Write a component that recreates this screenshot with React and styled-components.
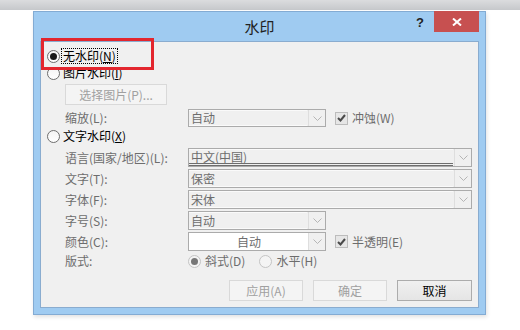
import React from 'react';
import styled, { createGlobalStyle } from 'styled-components';

const GlobalStyle = createGlobalStyle`
	html, body {
		margin: 0;
		padding: 0;
		background: #fff;
	}
	body {
		font-family: "Noto Sans CJK SC", "Liberation Sans", sans-serif;
		font-size: 12px;
		color: #000;
	}
`;

const Page = styled.div`
	width: 520px;
	height: 330px;
	overflow: hidden;
	background: #fff;
`;

const TopStrip = styled.div`
	height: 10px;
	background: linear-gradient(#dbdcde, #c6c8cb);
`;

const Window = styled.div`
	margin: 1px 0 0 33px;
	width: 453px;
	height: 304px;
	box-sizing: border-box;
	border: 1px solid #83abd3;
	background: #9fcbf1;
	padding: 0 6px 6px;
	display: flex;
	flex-direction: column;
	box-shadow: 1px 2px 4px rgba(0, 0, 0, 0.12);
`;

const TitleBar = styled.div`
	height: 29px;
	display: grid;
	grid-template-columns: 1fr auto 1fr;
	align-items: center;
`;

const Title = styled.div`
	grid-column: 2;
	font-size: 15px;
	color: #222;
	line-height: 1;
`;

const TitleControls = styled.div`
	grid-column: 3;
	justify-self: end;
	align-self: start;
	display: flex;
	align-items: flex-start;
`;

const Help = styled.div`
	margin-top: 4px;
	margin-right: 10px;
	font-family: "Liberation Sans", sans-serif;
	font-weight: bold;
	font-size: 13px;
	line-height: 13px;
	color: #222;
`;

const CloseButton = styled.div`
	margin-top: -1px;
	width: 45px;
	height: 21px;
	background: #c75050;
	display: flex;
	align-items: center;
	justify-content: center;
`;

const Client = styled.div`
	position: relative;
	flex: 1;
	border: 1px solid #8aaccf;
	background: #f0f0f0;
	padding: 6px 6px 0 6px;
	display: flex;
	flex-direction: column;
`;

const Annotation = styled.div`
	position: absolute;
	left: 0;
	top: -4px;
	width: 113px;
	height: 32px;
	box-sizing: border-box;
	border: 3px solid #e3262e;
	pointer-events: none;
`;

const Row = styled.div`
	display: flex;
	align-items: center;
	height: ${p => p.h || 16}px;
	margin-top: ${p => p.mt || 0}px;
	padding-left: ${p => p.indent || 0}px;
`;

const RadioCircle = styled.span`
	width: 13px;
	height: 13px;
	box-sizing: border-box;
	border-radius: 50%;
	border: 1px solid ${p => p.disabled ? '#c4c4c4' : '#6e6e6e'};
	background: ${p => p.disabled ? '#f4f4f4' : 'linear-gradient(#f4f4f4, #ffffff)'};
	margin-left: ${p => p.ml || 0}px;
	display: flex;
	align-items: center;
	justify-content: center;
	flex-shrink: 0;
	&::after {
		content: '';
		display: ${p => p.checked ? 'block' : 'none'};
		width: 7px;
		height: 7px;
		border-radius: 50%;
		background: ${p => p.disabled ? '#777' : '#1a1a1a'};
	}
`;

const Text = styled.span`
	color: ${p => p.dim ? '#6d6d6d' : '#000'};
	line-height: 14px;
	white-space: nowrap;
	margin-left: ${p => p.ml || 0}px;
	padding: 0 1px;
	outline: ${p => p.focus ? '1px dotted #000' : 'none'};
	outline-offset: 0;
`;

const FieldLabel = styled.span`
	width: 123px;
	flex-shrink: 0;
	color: #6d6d6d;
	white-space: nowrap;
	line-height: 14px;
`;

const Combo = styled.div`
	width: ${p => p.w}px;
	height: 100%;
	box-sizing: border-box;
	border: 1px solid #ababab;
	background: ${p => p.white ? '#fff' : '#f0f0f0'};
	display: flex;
	flex-shrink: 0;
`;

const ComboText = styled.div`
	flex: 1;
	margin-right: 1px;
	padding-left: 2px;
	box-sizing: border-box;
	border-top: 1px solid ${p => p.white ? '#fff' : '#fafafa'};
	border-bottom: ${p => p.underline ? '3px double #6d6d6d' : `1px solid ${p.white ? '#fff' : '#fafafa'}`};
	color: #6d6d6d;
	display: flex;
	align-items: center;
	justify-content: ${p => p.center ? 'center' : 'flex-start'};
	line-height: 14px;
	white-space: nowrap;
`;

const ComboButton = styled.div`
	width: 16px;
	border-left: 1px solid #dedede;
	background: #f0f0f0;
	display: flex;
	align-items: center;
	justify-content: center;
`;

const CheckGroup = styled.div`
	display: flex;
	align-items: center;
	margin-left: 9px;
`;

const CheckBox = styled.span`
	width: 13px;
	height: 13px;
	box-sizing: border-box;
	border: 1px solid #bcbcbc;
	background: #e6e6e6;
	display: flex;
	align-items: center;
	justify-content: center;
	margin-right: 3px;
`;

const PushButton = styled.div`
	width: ${p => p.w || 74}px;
	height: 21px;
	box-sizing: border-box;
	border: 1px solid ${p => p.disabled ? '#d9d9d9' : '#acacac'};
	background: ${p => p.disabled ? '#f4f4f4' : 'linear-gradient(#f0f0f0, #e5e5e5)'};
	color: ${p => p.disabled ? '#a0a0a0' : '#000'};
	display: flex;
	align-items: center;
	justify-content: center;
	line-height: 14px;
	white-space: nowrap;
	flex-shrink: 0;
`;

const ButtonBar = styled.div`
	display: flex;
	justify-content: flex-end;
	gap: 10px;
	margin-top: 11px;
`;

const Chevron = () => (
	<svg width="9" height="5" viewBox="0 0 9 5">
		<polyline points="0.5,0.5 4.5,4.5 8.5,0.5" fill="none" stroke="#b5b5b5" strokeWidth="1" />
	</svg>
);

const Tick = () => (
	<svg width="9" height="8" viewBox="0 0 9 8">
		<polyline points="1,4 3.5,6.5 8,1" fill="none" stroke="#4a4a4a" strokeWidth="2" />
	</svg>
);

const ComboBox = ({ w, value, white, center, underline }) => (
	<Combo w={w} white={white}>
		<ComboText white={white} center={center} underline={underline}>{value}</ComboText>
		<ComboButton><Chevron /></ComboButton>
	</Combo>
);

const Check = ({ label }) => (
	<CheckGroup>
		<CheckBox><Tick /></CheckBox>
		<Text dim>{label}</Text>
	</CheckGroup>
);

const fieldRows = [
	{ label: '语言(国家/地区)(L):', value: '中文(中国)', w: 284, underline: true },
	{ label: '文字(T):', value: '保密', w: 284 },
	{ label: '字体(F):', value: '宋体', w: 284 },
	{ label: '字号(S):', value: '自动', w: 138 },
];

export default function App() {
	return (
		<Page>
			<GlobalStyle />
			<TopStrip />
			<Window>
				<TitleBar>
					<Title>水印</Title>
					<TitleControls>
						<Help>?</Help>
						<CloseButton>
							<svg width="10" height="8" viewBox="0 0 10 8">
								<path d="M1 0.5 L9 7.5 M9 0.5 L1 7.5" stroke="#fff" strokeWidth="2" />
							</svg>
						</CloseButton>
					</TitleControls>
				</TitleBar>
				<Client>
					<Row>
						<RadioCircle checked />
						<Text ml={2} focus>无水印(<u>N</u>)</Text>
					</Row>
					<Row mt={1}>
						<RadioCircle />
						<Text ml={2}>图片水印(<u>I</u>)</Text>
					</Row>
					<Row mt={3} h={21} indent={18}>
						<PushButton w={102} disabled>选择图片(P)...</PushButton>
					</Row>
					<Row mt={4} h={18} indent={18}>
						<FieldLabel>缩放(L):</FieldLabel>
						<ComboBox w={138} value="自动" />
						<Check label="冲蚀(W)" />
					</Row>
					<Row mt={1}>
						<RadioCircle />
						<Text ml={2}>文字水印(<u>X</u>)</Text>
					</Row>
					{fieldRows.map((r, i) => (
						<Row key={i} mt={i === 0 ? 4 : 2} h={19} indent={18}>
							<FieldLabel>{r.label}</FieldLabel>
							<ComboBox w={r.w} value={r.value} underline={r.underline} />
						</Row>
					))}
					<Row mt={2} h={19} indent={18}>
						<FieldLabel>颜色(C):</FieldLabel>
						<ComboBox w={138} value="自动" white center />
						<Check label="半透明(E)" />
					</Row>
					<Row mt={2} indent={18}>
						<FieldLabel>版式:</FieldLabel>
						<RadioCircle checked disabled />
						<Text dim ml={3}>斜式(D)</Text>
						<RadioCircle disabled ml={13} />
						<Text dim ml={3}>水平(H)</Text>
					</Row>
					<ButtonBar>
						<PushButton disabled>应用(A)</PushButton>
						<PushButton disabled>确定</PushButton>
						<PushButton w={75}>取消</PushButton>
					</ButtonBar>
					<Annotation />
				</Client>
			</Window>
		</Page>
	);
}
